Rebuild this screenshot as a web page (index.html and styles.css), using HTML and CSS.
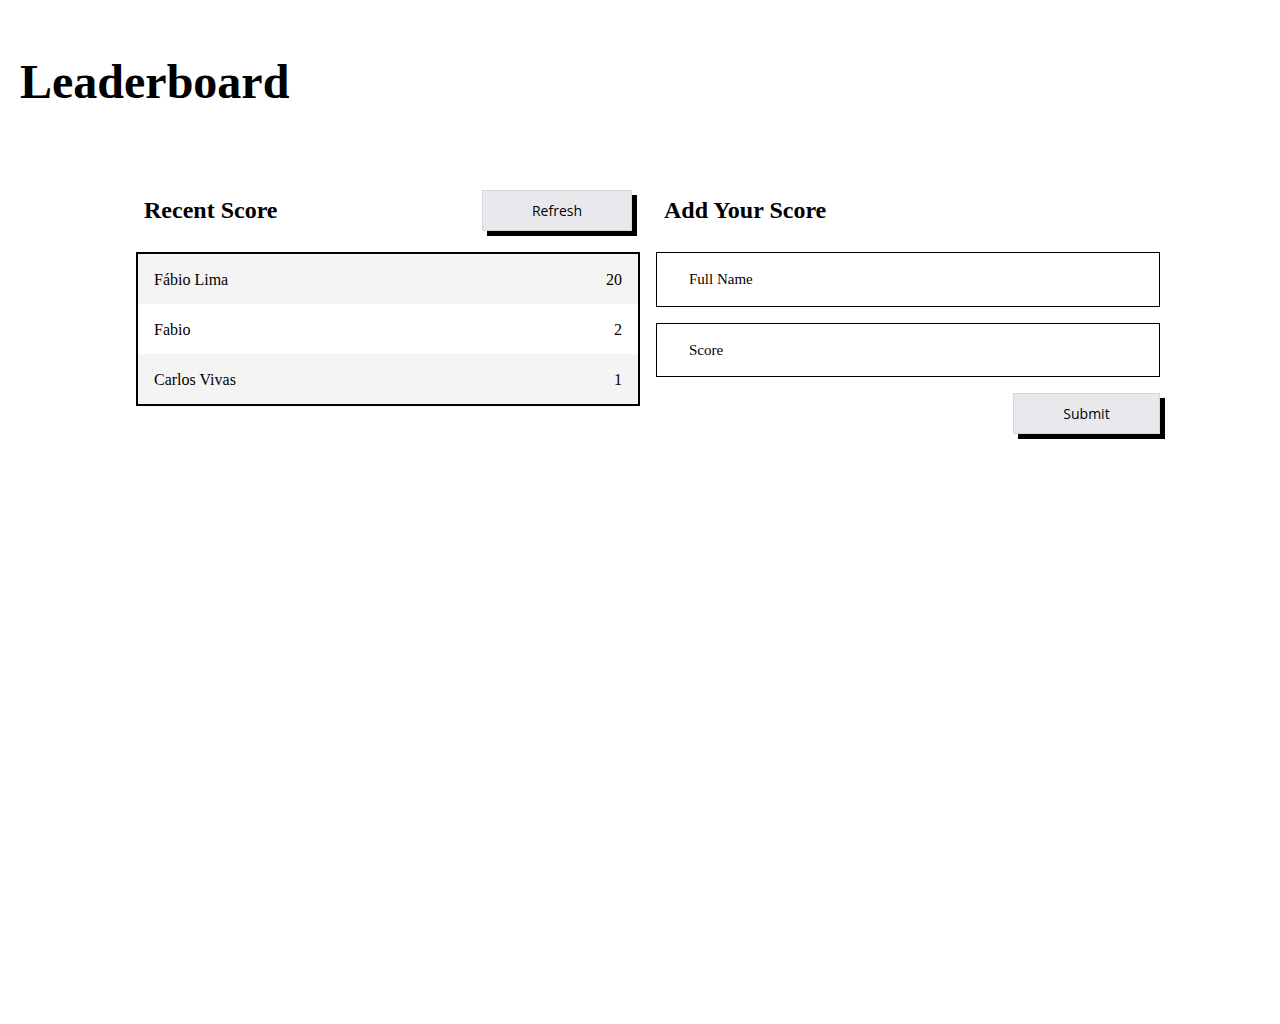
FILE: index.html
```html
<!DOCTYPE html>
<html lang="en">
<head>
<meta charset="utf-8">
<title>Leaderboard</title>
<link rel="stylesheet" href="styles.css">
</head>
<body>
<header class="top">
  <h1 class="title">Leaderboard</h1>
</header>
<main class="board">
  <section class="col">
    <div class="col-head">
      <h2 class="col-title">Recent Score</h2>
      <button class="btn btn-refresh" type="button">Refresh</button>
    </div>
    <ul class="scores">
      <li class="score-row"><span>Fábio Lima</span><span>20</span></li>
      <li class="score-row"><span>Fabio</span><span>2</span></li>
      <li class="score-row"><span>Carlos Vivas</span><span>1</span></li>
    </ul>
  </section>
  <section class="col">
    <div class="col-head">
      <h2 class="col-title">Add Your Score</h2>
    </div>
    <div class="form">
      <input class="field" type="text" placeholder="Full Name">
      <input class="field field-score" type="text" placeholder="Score">
      <div class="form-actions">
        <button class="btn btn-submit" type="button">Submit</button>
      </div>
    </div>
  </section>
</main>
</body>
</html>
```

FILE: styles.css
```css
* { box-sizing: border-box; }

body {
  margin: 0;
  background: #fff;
  color: #000;
  font-family: "Liberation Serif", "Times New Roman", serif;
}

.top {
  padding: 54px 20px 0;
}

.title {
  margin: 0;
  font-size: 48px;
  font-weight: bold;
  line-height: normal;
}

.board {
  width: 1024px;
  margin: 81px 0 0 136px;
  padding-bottom: 20px;
  display: grid;
  grid-template-columns: 1fr 1fr;
  column-gap: 16px;
  align-items: start;
}

.col-head {
  height: 41px;
  margin-bottom: 21px;
  padding: 0 8px;
  display: flex;
  align-items: center;
  justify-content: space-between;
}

.col-title {
  margin: 0;
  font-size: 24px;
  font-weight: bold;
  line-height: normal;
}

.btn {
  position: relative;
  height: 41px;
  background: #e9e9ed;
  border: 1px solid #d3d7d6;
  box-shadow: 5px 5px 0 #000;
  font-family: "Open Sans", "Liberation Sans", sans-serif;
  font-size: 14px;
  color: #000;
  padding: 0;
  cursor: pointer;
}

.btn-refresh { width: 150px; }
.btn-submit { width: 147px; }

.scores {
  list-style: none;
  margin: 0;
  padding: 0;
  border: 2px solid #000;
}

.score-row {
  height: 50px;
  padding: 2px 16px 0;
  display: flex;
  align-items: center;
  justify-content: space-between;
  font-size: 16px;
}

.score-row:nth-child(odd) {
  background: #f4f4f4;
}

.form {
  display: flex;
  flex-direction: column;
  gap: 16px;
  padding-bottom: 10px;
}

.field {
  display: block;
  width: 100%;
  height: 55px;
  padding: 0 32px;
  border: 1px solid #000;
  border-radius: 0;
  font-family: "Liberation Serif", "Times New Roman", serif;
  font-size: 15px;
  color: #000;
  background: #fff;
  outline: none;
}

.field-score { height: 54px; }

.field::placeholder {
  color: #000;
  opacity: 1;
}

.form-actions {
  display: flex;
  justify-content: flex-end;
}
```
